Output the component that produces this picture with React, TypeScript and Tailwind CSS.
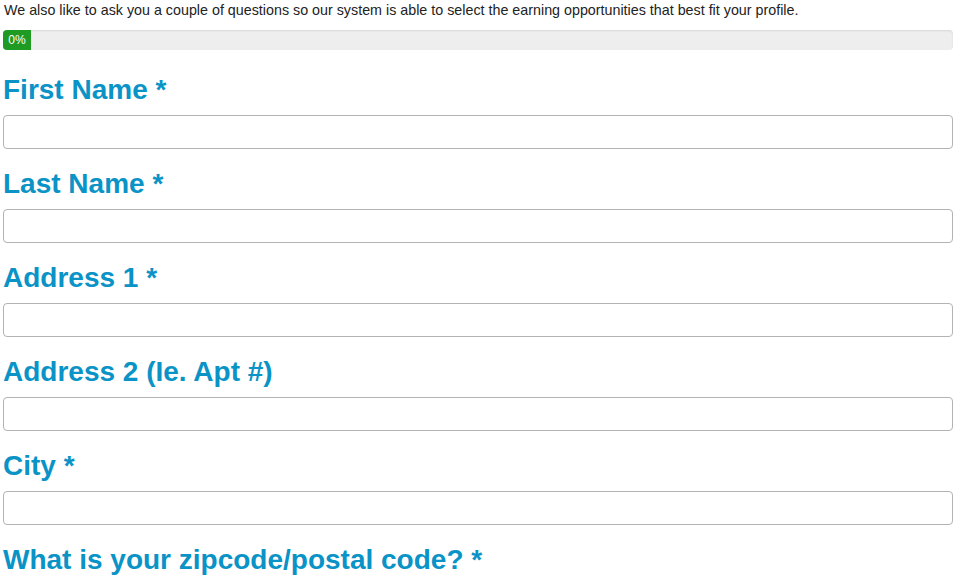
import React from "react";

const fields = [
  "First Name *",
  "Last Name *",
  "Address 1 *",
  "Address 2 (Ie. Apt #)",
  "City *",
];

export default function App() {
  return (
    <div className="bg-white w-[965px] h-[581px] overflow-hidden pl-[3px] pr-[12px] pt-[1px]" style={{ fontFamily: '"Liberation Sans", Arial, sans-serif' }}>
      <p className="text-[14.3px] leading-[18px] text-[#222] pl-[1px] whitespace-nowrap">
        We also like to ask you a couple of questions so our system is able to select the earning opportunities that best fit your profile.
      </p>
      <div className="mt-[11px] h-[20px] w-[950px] rounded-[4px] bg-[#eeeeee] overflow-hidden shadow-[inset_0_1px_2px_rgba(0,0,0,0.1)]">
        <div className="h-full w-[28px] bg-[#1f9a22] text-white text-[12px] leading-[20px] text-center">0%</div>
      </div>
      {fields.map((f, i) => (
        <div key={f} className={i === 0 ? "mt-[24px]" : "mt-[19px]"}>
          <h3 className="text-[28px] leading-[32px] font-bold text-[#0a93c6]">{f}</h3>
          <input
            type="text"
            className="mt-[9px] block w-[950px] h-[34px] rounded-[4px] border border-[#b3b3b3] bg-white outline-none"
          />
        </div>
      ))}
      <div className="mt-[19px]">
        <h3 className="text-[28px] leading-[32px] font-bold text-[#0a93c6]">What is your zipcode/postal code? *</h3>
      </div>
    </div>
  );
}
